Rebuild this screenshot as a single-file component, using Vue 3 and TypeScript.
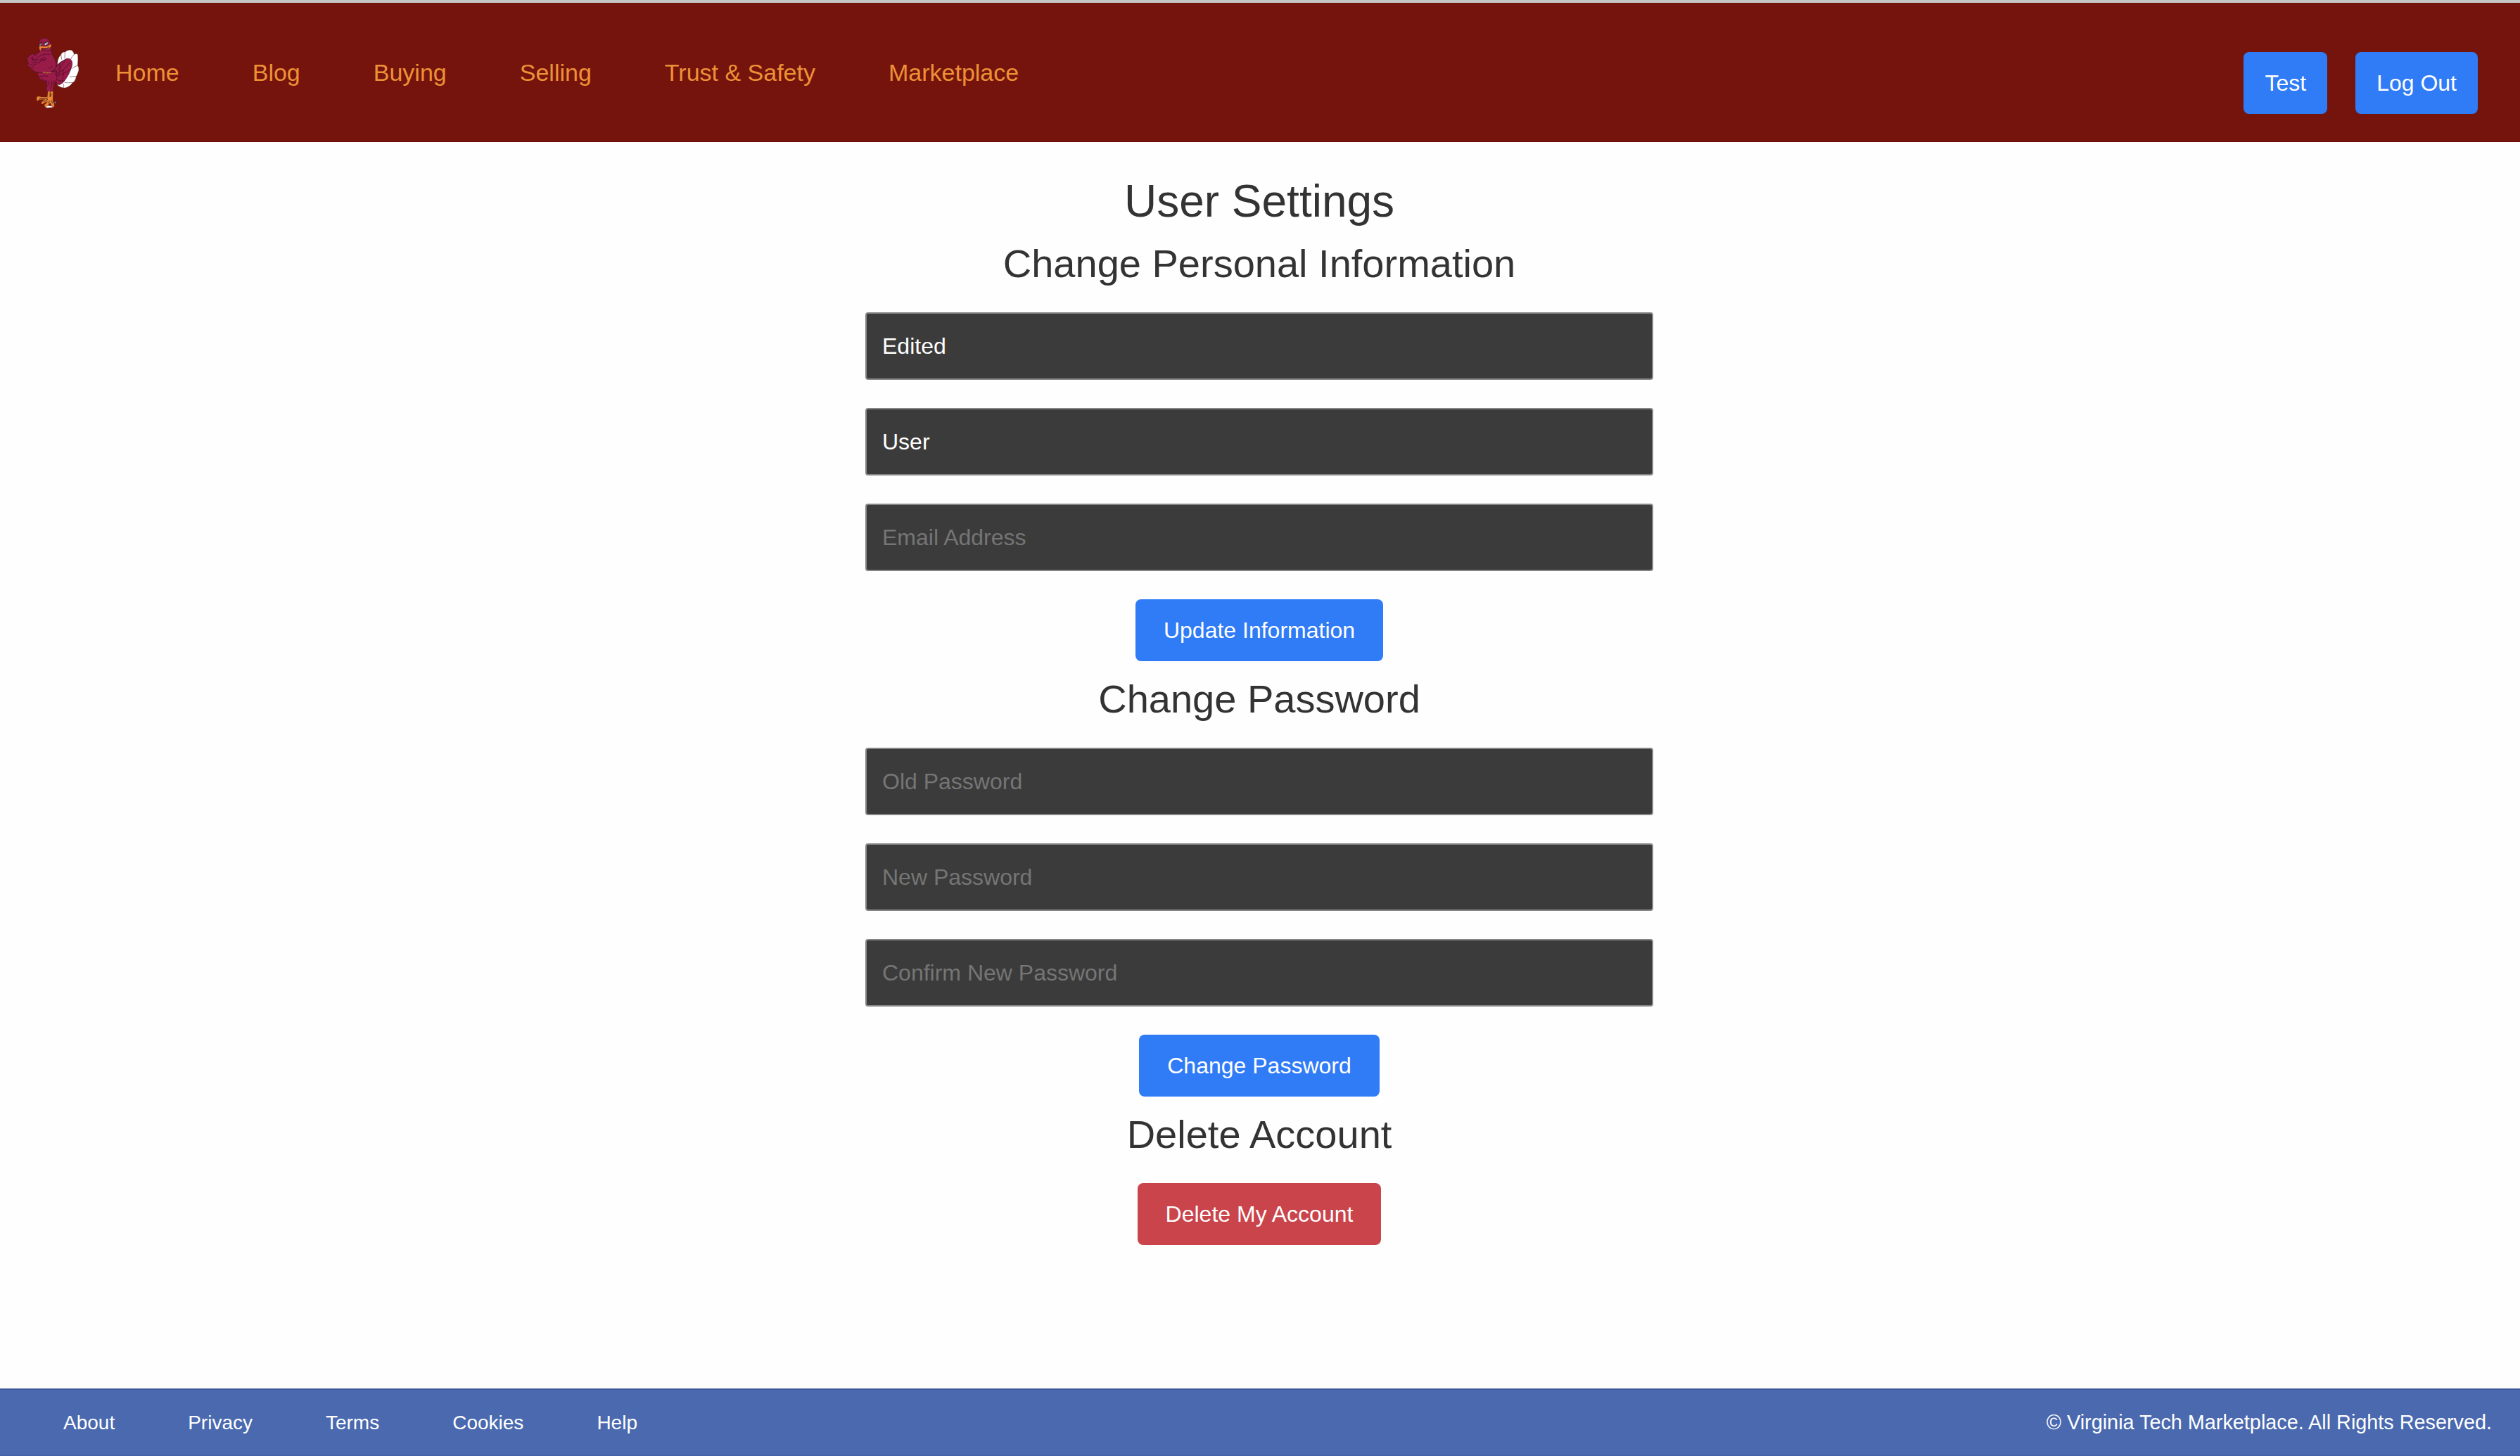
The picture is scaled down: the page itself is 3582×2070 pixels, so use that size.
<script setup lang="ts">
import { ref } from 'vue'

interface Field {
  name: string
  type: string
  placeholder: string
  value: string
}

const navLinks: string[] = ['Home', 'Blog', 'Buying', 'Selling', 'Trust & Safety', 'Marketplace']
const footerLinks: string[] = ['About', 'Privacy', 'Terms', 'Cookies', 'Help']

const personal = ref<Field[]>([
  { name: 'first', type: 'text', placeholder: 'First Name', value: 'Edited' },
  { name: 'last', type: 'text', placeholder: 'Last Name', value: 'User' },
  { name: 'email', type: 'email', placeholder: 'Email Address', value: '' },
])

const passwords = ref<Field[]>([
  { name: 'old', type: 'password', placeholder: 'Old Password', value: '' },
  { name: 'new', type: 'password', placeholder: 'New Password', value: '' },
  { name: 'confirm', type: 'password', placeholder: 'Confirm New Password', value: '' },
])
</script>

<template>
  <div class="page">
    <header class="header">
      <svg class="logo" viewBox="0 0 330 360" aria-hidden="true">
        <!-- tail fan -->
        <path class="white" d="M187 136 Q190 122 200 113 Q205 100 217 102 Q228 91 244 94 Q254 99 256 112 Q266 107 272 113 Q274 134 271 160 Q278 168 275 183 Q269 200 265 206 Q262 226 250 232 Q238 251 217 255 Q198 255 186 244 L178 200Z" />
        <path class="thin" d="M200 113 L203 134 M217 102 L216 130 M256 112 Q246 121 242 133 M271 160 Q258 162 248 172 M265 206 Q250 206 237 208 M250 232 Q232 235 215 232 M210 254 Q214 246 211 238" />
        <path class="maroon" d="M182 158 Q204 138 226 130 Q241 128 247 142 Q251 158 241 178 Q233 201 220 218 Q208 237 192 242 Q178 236 174 222 L168 190Z" />
        <path class="line" d="M181 165 L202 142 M182 184 Q201 166 222 131 M176 195 Q206 190 238 147 M177 204 Q210 200 243 174 M181 219 Q197 228 213 225 M194 151 Q199 174 190 205 M209 176 Q212 204 206 228" />
        <!-- feet -->
        <path class="white" d="M132 336 L144 330 L161 332 L168 338 L140 340Z" />
        <path class="orange" d="M145 265 L142 294 L116 294 Q99 288 98 294 Q94 300 97 309 Q103 313 105 305 L132 304 Q117 314 116 321 Q120 327 126 320 L143 312 Q135 325 130 326 Q128 336 136 336 Q145 329 154 318 L164 337 L172 334 L170 321 L165 310 L166 269Z" />
        <path class="bold" d="M154 270 L153 293 L160 281 M108 301 L143 299 M126 315 L144 303 M145 320 L153 310 M159 309 L164 320" />
        <circle cx="176" cy="317" r="4.5" fill="#74777c" stroke="#301014" />
        <!-- legs -->
        <path class="maroon" d="M99 190 L105 213 Q116 225 138 230 L140 244 L137 264 L144 271 L150 266 L158 271 L166 266 L171 238 L182 220 L181 184Z" />
        <!-- body and folded wings -->
        <path class="maroon" d="M119 91 Q109 104 87 114 L78 109 L65 117 L55 131 L60 147 L58 160 L72 174 L94 188 L150 188 Q169 183 176 173 L181 151 Q176 130 163 113 L155 88Z" />
        <path class="line" d="M69 128 L81 123 L77 135 L93 132 M75 142 L85 150 L95 144 L105 150 L116 139 L130 137 M78 133 L91 141 L99 131 L108 140 L124 124 L137 129 M88 116 L96 119 M102 123 Q127 107 153 112 M116 133 Q126 137 138 133 M61 151 L78 159 L93 154 M69 166 L84 170 M148 171 L163 164 M105 210 Q122 199 143 205 M117 218 L144 229 M151 228 L143 247 M162 226 L157 259 M172 224 L165 240 M176 138 L181 149 M181 184 L175 201" />
        <path class="belt" d="M122 187 Q139 193 158 188" />
        <!-- head -->
        <path class="maroon" d="M105 78 L106 62 Q109 45 124 42 Q147 40 154 61 L158 91 Q143 102 119 93Z" />
        <path class="eye" d="M108 68 L117 62 L117 72 L109 76Z M128 67 L143 57 L145 67 L132 75Z" />
        <path class="bold" d="M107 68 L119 57 M127 65 L143 58 M111 70 L114 68 M137 68 L140 65" />
        <path class="orange" d="M108 77 Q116 72 125 78 Q140 82 157 68 L159 75 Q154 86 141 88 Q126 85 117 84 Q112 91 115 97 Q105 92 108 77Z" />
        <path class="bold" d="M119 90 Q137 87 149 83 M115 75 L122 77" />
      </svg>

      <nav class="nav">
        <a v-for="link in navLinks" :key="link">{{ link }}</a>
      </nav>

      <div class="account">
        <button class="btn compact">Test</button>
        <button class="btn compact">Log Out</button>
      </div>
    </header>

    <main class="main">
      <h1>User Settings</h1>

      <h2 class="first">Change Personal Information</h2>
      <form class="form" @submit.prevent>
        <input v-for="f in personal" :key="f.name" v-model="f.value" :type="f.type" :placeholder="f.placeholder" />
        <button class="btn">Update Information</button>
      </form>

      <h2>Change Password</h2>
      <form class="form" @submit.prevent>
        <input v-for="f in passwords" :key="f.name" v-model="f.value" :type="f.type" :placeholder="f.placeholder" />
        <button class="btn">Change Password</button>
      </form>

      <h2>Delete Account</h2>
      <button class="btn danger">Delete My Account</button>
    </main>

    <footer class="footer">
      <nav class="footer-links">
        <a v-for="link in footerLinks" :key="link">{{ link }}</a>
      </nav>
      <p class="copyright">© Virginia Tech Marketplace. All Rights Reserved.</p>
    </footer>
  </div>
</template>

<style>
body {
  margin: 0;
  background: #fefefe;
}
</style>

<style scoped>
.page {
  display: flex;
  flex-direction: column;
  box-sizing: border-box;
  height: 2070px;
  overflow: hidden;
  font-family: "Liberation Sans", Arial, Helvetica, sans-serif;
  color: #333;
}

.header {
  display: flex;
  align-items: flex-start;
  flex: none;
  box-sizing: border-box;
  height: 202px;
  padding: 0 60px 0 20px;
  border-top: 4px solid #c6c6c6;
  border-bottom: 1px solid #6a0c0a;
  background: #74140d;
}

.logo {
  width: 110px;
  height: 120px;
  margin-top: 36px;
}

.maroon {
  fill: #981b48;
  stroke: #4a0f28;
  stroke-width: 1.8;
  stroke-linejoin: round;
}

.white {
  fill: #fff;
  stroke: #4a2025;
  stroke-width: 1;
}

.thin {
  fill: none;
  stroke: #7a5556;
  stroke-width: 2.2;
}

.line {
  fill: none;
  stroke: #4b0c26;
  stroke-width: 2.2;
  stroke-linecap: round;
}

.orange {
  fill: #ea8833;
  stroke: #8a4218;
  stroke-width: 1;
}

.bold {
  fill: none;
  stroke: #26101a;
  stroke-width: 2.6;
}

.belt {
  fill: none;
  stroke: #b5722d;
  stroke-width: 5;
  stroke-dasharray: 5 1;
}

.eye {
  fill: #d5e1e5;
  stroke: #26101a;
  stroke-width: 2;
}

.nav {
  display: flex;
  gap: 104px;
  margin: 79px 0 0 34px;
  font-size: 34px;
  line-height: 40px;
  color: #ed9136;
}

.account {
  display: flex;
  gap: 40px;
  margin: 70px 0 0 auto;
}

.btn {
  flex: none;
  height: 88px;
  padding: 0 40px;
  border: 0;
  border-radius: 8px;
  background: #307bf6;
  color: #fff;
  font: 32px/88px "Liberation Sans", Arial, Helvetica, sans-serif;
}

.btn.compact {
  padding: 0 30px;
}

.btn.danger {
  background: #ca444b;
}

.main {
  display: flex;
  flex: 1;
  flex-direction: column;
  align-items: center;
  min-height: 0;
  padding: 46px 2px 0 0;
}

h1 {
  margin: 0;
  font-size: 64px;
  font-weight: 400;
  line-height: 76px;
}

h2 {
  margin: 20px 0 35px;
  font-size: 56px;
  font-weight: 400;
  line-height: 68px;
}

h2.first {
  margin-top: 17px;
}

.form {
  display: flex;
  flex-direction: column;
  align-items: center;
  gap: 40px;
}

.form input {
  box-sizing: border-box;
  width: 1120px;
  height: 96px;
  padding: 0 22px;
  border: 2px solid #858585;
  border-radius: 4px;
  outline: 0;
  background: #3b3b3b;
  color: #fff;
  font: 32px "Liberation Sans", Arial, Helvetica, sans-serif;
}

.form input::placeholder {
  color: #757575;
}

.footer {
  display: flex;
  align-items: flex-start;
  justify-content: space-between;
  flex: none;
  box-sizing: border-box;
  height: 96px;
  padding: 0 40px 0 90px;
  border-top: 2px solid #3b5998;
  border-bottom: 2px solid #4463a8;
  background: #4a69af;
  color: #fff;
}

.footer-links {
  display: flex;
  gap: 104px;
  margin-top: 31px;
  font-size: 28px;
  line-height: 32px;
}

.copyright {
  margin: 30px 0 0;
  font-size: 28.8px;
  line-height: 32px;
}
</style>
